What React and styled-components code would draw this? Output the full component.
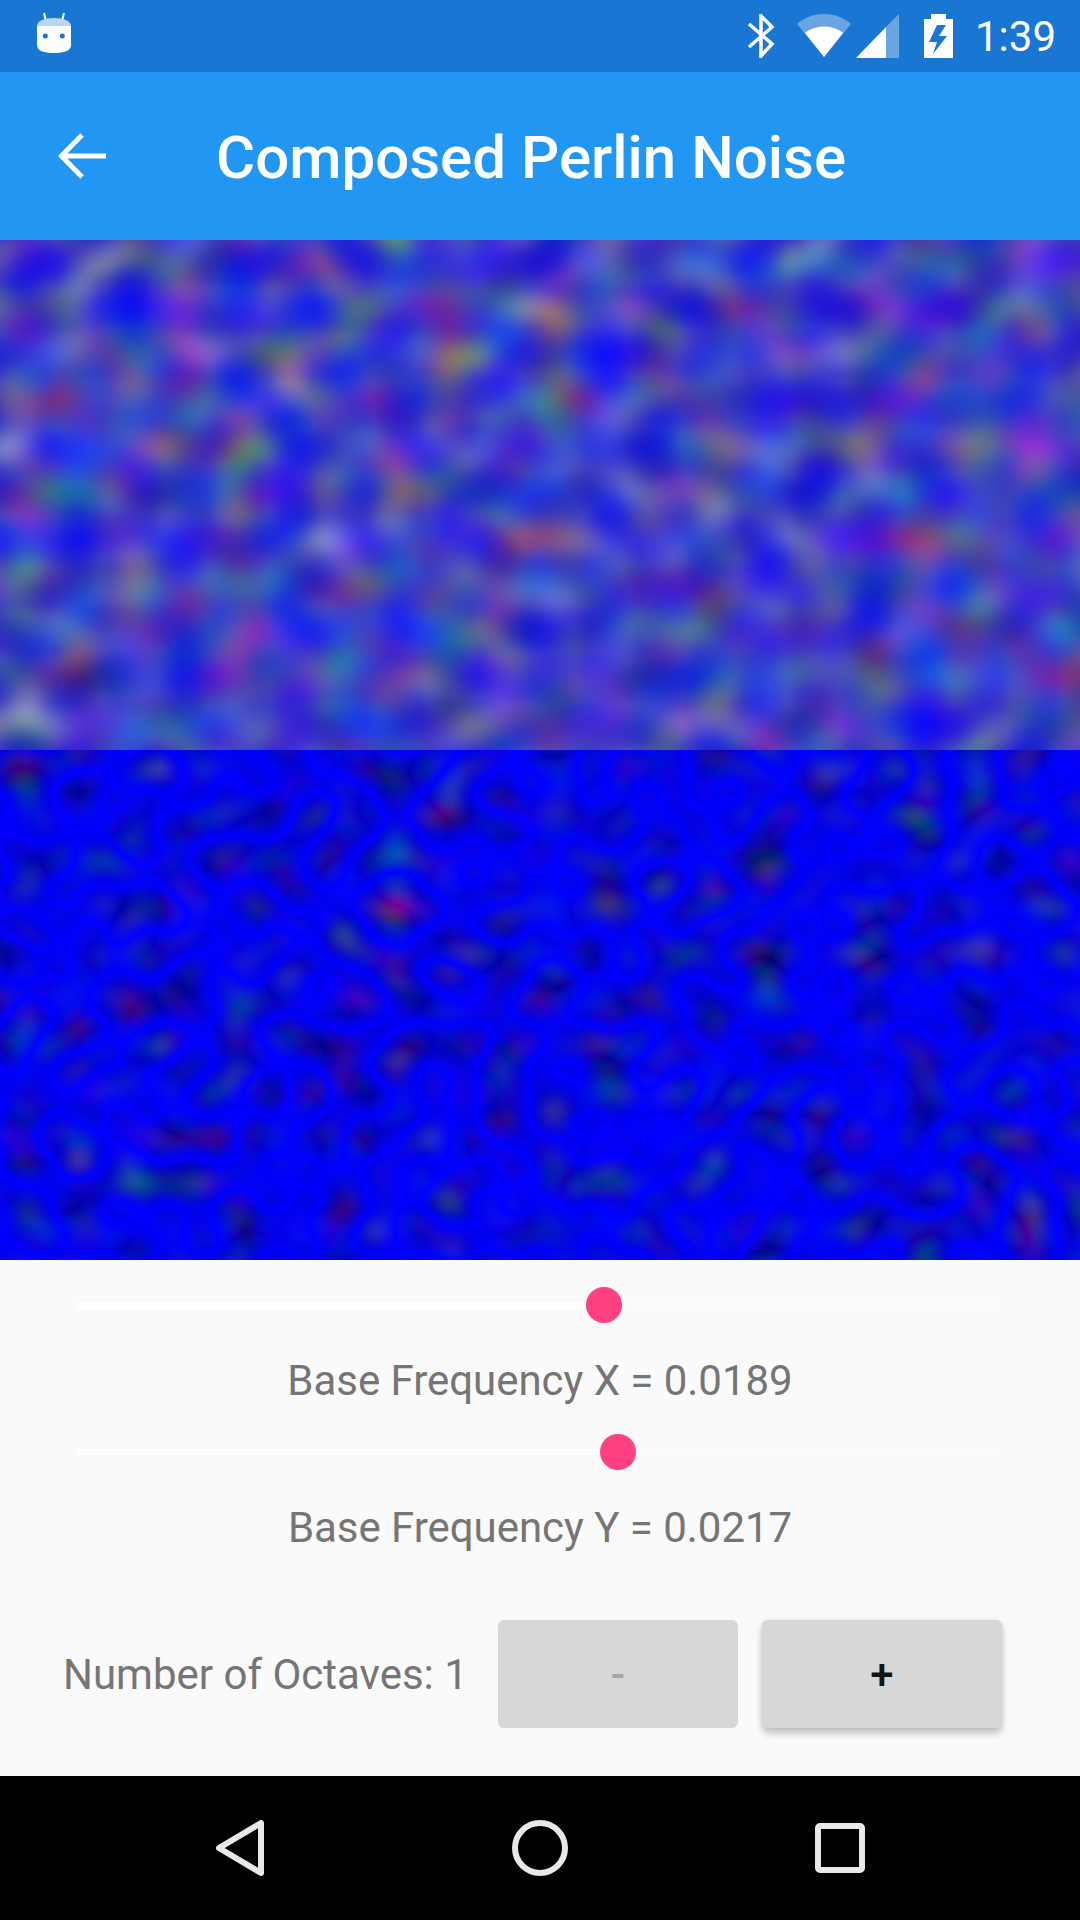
import React from 'react';
import styled, { createGlobalStyle } from 'styled-components';

const GlobalStyle = createGlobalStyle`
  html, body { margin: 0; padding: 0; background: #000; }
  body { font-family: Roboto, "Liberation Sans", sans-serif; }
`;

const Screen = styled.div`
  width: 1080px;
  height: 1920px;
  display: flex;
  flex-direction: column;
  overflow: hidden;
  background: #fafafa;
`;

const StatusBar = styled.div`
  height: 72px;
  flex: none;
  display: flex;
  align-items: center;
  padding: 0 24px 0 36px;
  background: #1976d2;
  color: #fff;
`;

const StatusIcons = styled.div`
  margin-left: auto;
  display: flex;
  align-items: center;
`;

const StatusSlot = styled.div`
  display: flex;
  margin-left: ${({ $gap }) => $gap}px;
`;

const Clock = styled.span`
  font-size: 42px;
  margin-left: 22px;
`;

const AppBar = styled.div`
  height: 168px;
  flex: none;
  display: flex;
  align-items: center;
  background: #2196f3;
  color: #fff;
`;

const BackButton = styled.div`
  width: 216px;
  flex: none;
  padding-left: 58px;
  box-sizing: border-box;
  display: flex;
`;

const Title = styled.div`
  font-size: 60px;
  font-weight: 500;
  padding-top: 3px;
`;

const NoiseCanvas = styled.svg`
  display: block;
  width: 1080px;
  height: 510px;
  flex: none;
`;

const Controls = styled.div`
  flex: 1;
  display: flex;
  flex-direction: column;
`;

const SliderRow = styled.div`
  height: 90px;
  padding: 0 80px 0 78px;
  display: flex;
  align-items: center;
`;

const Track = styled.div`
  position: relative;
  width: 100%;
  height: 6px;
  background: #fbfbfb;
`;

const TrackFill = styled.div`
  height: 100%;
  background: #fff;
`;

const Thumb = styled.div`
  position: absolute;
  top: -15px;
  width: 36px;
  height: 36px;
  margin-left: -18px;
  border-radius: 50%;
  background: #ff4081;
`;

const Caption = styled.div`
  height: 57px;
  line-height: 61px;
  text-align: center;
  font-size: 42px;
  letter-spacing: -0.04px;
  color: #757575;
`;

const OctaveRow = styled.div`
  margin-top: 66px;
  padding: 0 78px 0 63px;
  display: flex;
  align-items: center;
`;

const OctaveLabel = styled.div`
  width: 435px;
  flex: none;
  font-size: 42px;
  color: #757575;
`;

const StepButton = styled.div`
  width: 240px;
  height: 108px;
  flex: none;
  display: flex;
  align-items: center;
  justify-content: center;
  border-radius: 6px;
  background: #d6d7d7;
  font-size: 42px;
  font-weight: 500;
  color: ${({ disabled }) => (disabled ? '#a4a5a5' : '#141414')};
  box-shadow: ${({ disabled }) =>
    disabled ? 'none' : '0 6px 7px rgba(0, 0, 0, 0.2), 0 0 5px rgba(0, 0, 0, 0.1)'};
  & + & { margin-left: 24px; }
`;

const NavBar = styled.div`
  height: 144px;
  flex: none;
  display: flex;
  align-items: center;
  justify-content: center;
  background: #000;
`;

const NavSlot = styled.div`
  width: 300px;
  display: flex;
  justify-content: center;
`;

const BotIcon = () => (
  <svg width="36" height="54" viewBox="0 0 36 54">
    <path d="M8 4l2 8M28 4l-2 8" stroke="#fff" strokeWidth="2" />
    <path d="M1 17C1 12 8 9 18 9s17 3 17 8z" fill="#bbd6f2" />
    <path d="M1 17h34v19c0 6-7 8-17 8S1 42 1 36z" fill="#fff" />
    <circle cx="9.300" cy="27" r="2.500" fill="#1976d2" />
    <circle cx="26.300" cy="27" r="2.500" fill="#1976d2" />
  </svg>
);

const BluetoothIcon = () => (
  <svg width="28" height="44" viewBox="0 0 28 44" fill="none" stroke="#fff" strokeWidth="3.500">
    <path d="M2 10l23 20-11 12V2l11 11L2 33" />
  </svg>
);

const WifiIcon = () => (
  <svg width="54" height="44" viewBox="0 0 54 44">
    <path d="M0 10C7 4 16 0 27 0s20 4 27 10L27 43z" fill="#fff" opacity="0.35" />
    <path d="M8 19c5-4 12-6.500 19-6.500S41 15 46 19L27 43z" fill="#fff" />
  </svg>
);

const SignalIcon = () => (
  <svg width="43" height="44" viewBox="0 0 43 44">
    <path d="M43 0v44H30V13z" fill="#fff" opacity="0.35" />
    <path d="M30 13v31H0z" fill="#fff" />
  </svg>
);

const BatteryIcon = () => (
  <svg width="29" height="44" viewBox="0 0 29 44">
    <path
      fillRule="evenodd"
      fill="#fff"
      d="M7 0h15v5h7v39H0V5h7zM13 11L5 28h8l-4 12 14-18h-8l7-11z"
    />
  </svg>
);

const BackArrow = () => (
  <svg width="48" height="48" viewBox="0 0 48 48" fill="none" stroke="#fff" strokeWidth="5">
    <path d="M48 24H4M24 3L3.500 24 24 45" />
  </svg>
);

const NavBack = () => (
  <svg width="48" height="56" viewBox="0 0 48 56" fill="none" stroke="#e8e8e8" strokeWidth="6" strokeLinejoin="round">
    <path d="M45 3v50L3 28z" />
  </svg>
);

const NavHome = () => (
  <svg width="56" height="56" viewBox="0 0 56 56" fill="none" stroke="#e8e8e8" strokeWidth="6">
    <circle cx="28" cy="28" r="25" />
  </svg>
);

const NavRecent = () => (
  <svg width="50" height="50" viewBox="0 0 50 50" fill="none" stroke="#e8e8e8" strokeWidth="6" strokeLinejoin="round">
    <rect x="3" y="3" width="44" height="44" rx="2" />
  </svg>
);

// the picture really is feTurbulence noise over a blue rect, so use the same primitive.
// both panels share one noise field, the second just carries on at y=510
const Noise = ({ id, type, top }) => (
  <NoiseCanvas viewBox={`0 ${top} 1080 510`}>
    <filter
      id={id}
      filterUnits="userSpaceOnUse"
      x="0"
      y={top}
      width="1080"
      height="510"
      colorInterpolationFilters="sRGB"
    >
      <feTurbulence type={type} baseFrequency="0.0189 0.0217" numOctaves="1" seed="0" />
    </filter>
    <rect y={top} width="1080" height="510" fill="#0000ff" />
    <rect y={top} width="1080" height="510" filter={`url(#${id})`} />
  </NoiseCanvas>
);

const Slider = ({ percent }) => (
  <SliderRow>
    <Track>
      <TrackFill style={{ width: `${percent}%` }} />
      <Thumb style={{ left: `${percent}%` }} />
    </Track>
  </SliderRow>
);

const App = () => (
  <>
    <GlobalStyle />
    <Screen>
      <StatusBar>
        <BotIcon />
        <StatusIcons>
          <StatusSlot $gap={0}><BluetoothIcon /></StatusSlot>
          <StatusSlot $gap={22}><WifiIcon /></StatusSlot>
          <StatusSlot $gap={5}><SignalIcon /></StatusSlot>
          <StatusSlot $gap={25}><BatteryIcon /></StatusSlot>
          <Clock>1:39</Clock>
        </StatusIcons>
      </StatusBar>
      <AppBar>
        <BackButton>
          <BackArrow />
        </BackButton>
        <Title>Composed Perlin Noise</Title>
      </AppBar>
      <Noise id="fractal" type="fractalNoise" top={0} />
      <Noise id="turbulence" type="turbulence" top={510} />
      <Controls>
        <Slider percent={57.05} />
        <Caption>Base Frequency X = 0.0189</Caption>
        <Slider percent={58.6} />
        <Caption>Base Frequency Y = 0.0217</Caption>
        <OctaveRow>
          <OctaveLabel>Number of Octaves: 1</OctaveLabel>
          <StepButton disabled>-</StepButton>
          <StepButton>+</StepButton>
        </OctaveRow>
      </Controls>
      <NavBar>
        <NavSlot><NavBack /></NavSlot>
        <NavSlot><NavHome /></NavSlot>
        <NavSlot><NavRecent /></NavSlot>
      </NavBar>
    </Screen>
  </>
);

export default App;
